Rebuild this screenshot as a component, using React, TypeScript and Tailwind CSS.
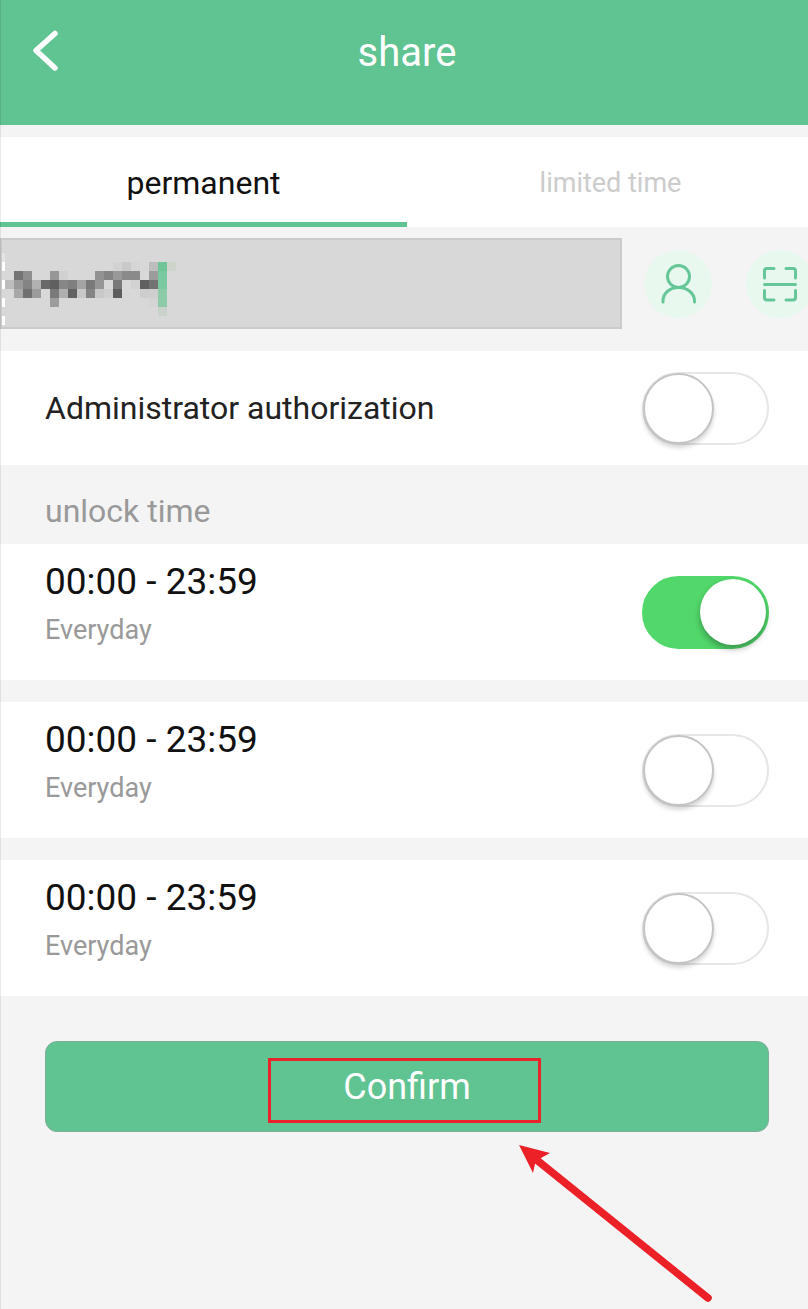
import { useState } from "react";

const CELL = 9;

// [column, row, colour] of each block in the obscured account name
const MOSAIC: [number, number, string][] = [
  [12, 0, "#d2d2d2"], [13, 0, "#c9c9c9"], [14, 0, "#d5d5d5"], [16, 0, "#bdbdbd"], [17, 0, "#6fc598"], [18, 0, "#cdd5cb"],
  [1, 1, "#747474"], [2, 1, "#8e8e8e"], [5, 1, "#979797"], [6, 1, "#d1d1d1"], [10, 1, "#929292"], [11, 1, "#848484"],
  [12, 1, "#999999"], [13, 1, "#8a8a8a"], [14, 1, "#8a8a8a"], [16, 1, "#9c9c9c"], [17, 1, "#79c8a0"],
  [0, 2, "#bcbcbc"], [1, 2, "#9a9a9a"], [2, 2, "#848484"], [3, 2, "#b1b1b1"], [4, 2, "#696969"], [5, 2, "#606060"],
  [6, 2, "#878787"], [7, 2, "#7f7f7f"], [8, 2, "#a3a3a3"], [9, 2, "#797979"], [10, 2, "#969696"], [12, 2, "#787878"],
  [14, 2, "#d2d2d2"], [15, 2, "#606060"], [16, 2, "#727272"], [17, 2, "#79c8a0"],
  [1, 3, "#a8a8a8"], [2, 3, "#707070"], [3, 3, "#9b9b9b"], [5, 3, "#7a7a7a"], [6, 3, "#b0b0b0"], [7, 3, "#626262"],
  [8, 3, "#c8c8c8"], [9, 3, "#848484"], [10, 3, "#c8c8c8"], [11, 3, "#cfcfcf"], [12, 3, "#5c5c5c"], [15, 3, "#cdcdcd"],
  [16, 3, "#cfcfcf"], [17, 3, "#8dcaa8"],
  [5, 4, "#9d9d9d"], [16, 4, "#d4d4d4"], [17, 4, "#8dcaa8"],
  [17, 5, "#c9d3cc"],
];

function Mosaic() {
  return (
    <svg
      aria-hidden="true"
      width="180"
      height="91"
      viewBox="0 0 180 91"
      shapeRendering="crispEdges"
      className="pointer-events-none absolute top-0 left-0"
    >
      <rect x="2" y="15" width="3" height="9" fill="#e4e4e4" />
      {[24, 42, 60, 78].map((y) => (
        <rect key={y} x="2" y={y} width="3" height="9" fill="#fff" />
      ))}
      {MOSAIC.map(([c, r, fill]) => (
        <rect key={`${c}-${r}`} x={5 + c * CELL} y={24 + r * CELL} width={CELL} height={CELL} fill={fill} />
      ))}
    </svg>
  );
}

function Switch({ id, initial = false }: { id: string; initial?: boolean }) {
  const [on, setOn] = useState(initial);
  return (
    <input
      id={id}
      type="checkbox"
      role="switch"
      checked={on}
      onChange={(e) => setOn(e.target.checked)}
      className="flex h-[73px] w-[127px] shrink-0 cursor-pointer appearance-none items-center rounded-full border-2 border-[#e6e6e6] bg-white before:-ml-px before:size-[71px] before:rounded-full before:border-2 before:border-[#c4c4c4] before:bg-white before:shadow-[0_4px_4px_rgba(0,0,0,0.16)] before:content-[''] checked:justify-end checked:border-[#51d76a] checked:bg-[#51d76a] checked:before:mr-px checked:before:size-[66px] checked:before:border-0 checked:before:shadow-[0_4px_6px_rgba(0,0,0,0.3)]"
    />
  );
}

function TimeRow({ id, on }: { id: string; on?: boolean }) {
  return (
    <li className="flex h-[136px] items-center justify-between bg-white pr-[39px] pl-[45px]">
      <label htmlFor={id} className="flex flex-col gap-2 pb-4">
        <span className="text-[37px] leading-[44px] text-[#111]">00:00 - 23:59</span>
        <span className="text-[27px] leading-9 text-[#999]">Everyday</span>
      </label>
      <Switch id={id} initial={on} />
    </li>
  );
}

export default function App() {
  const [tab, setTab] = useState("permanent");
  const tabs = ["permanent", "limited time"];

  return (
    <div className="relative min-h-screen overflow-hidden bg-[#f4f4f4] font-['Roboto',sans-serif]">
      <header className="-mr-1.5 grid h-[125px] grid-cols-[1fr_auto_1fr] items-start bg-[#5fc392] pt-7 text-white">
        <button type="button" aria-label="Back" className="ml-7 flex size-11 items-center justify-center">
          <svg width="36" height="44" viewBox="0 0 36 44" fill="none" stroke="currentColor" strokeWidth="5.500" strokeLinecap="round" strokeLinejoin="round">
            <path d="M23 5.500 L4 22.500 L23 40" />
          </svg>
        </button>
        <h1 className="text-[40px] leading-[50px]">share</h1>
      </header>

      <div role="tablist" className="mt-3 -mr-1.5 grid h-[90px] grid-cols-2 bg-white">
        {tabs.map((name) => (
          <button
            key={name}
            type="button"
            role="tab"
            aria-selected={tab === name}
            onClick={() => setTab(name)}
            className={
              tab === name
                ? "border-b-[5px] border-[#5fc392] pt-1.5 text-[32px] text-[#111]"
                : "border-b-[5px] border-transparent pt-2 text-[27px] text-[#ccc]"
            }
          >
            {name}
          </button>
        ))}
      </div>

      <div className="mt-[11px] -mr-1.5 flex items-center">
        <div className="relative min-w-0 flex-1">
          <input
            type="text"
            aria-label="Account"
            className="block h-[91px] w-full border-2 border-[#cbcbcb] bg-[#d8d8d8] px-3 text-[32px] outline-none"
          />
          <Mosaic />
        </div>
        <button type="button" aria-label="Contacts" className="ml-[22px] flex size-[68px] items-center justify-center rounded-full bg-[#e8f8ef] text-[#65c797]">
          <svg width="68" height="68" viewBox="0 0 68 68" fill="none" stroke="currentColor" strokeWidth="3" strokeLinecap="round">
            <circle cx="34.500" cy="26.500" r="11" />
            <path d="M19 52 V51 C19 43 26 37.500 34.500 37.500 C43 37.500 50.500 43 50.500 51 V52" />
          </svg>
        </button>
        <button type="button" aria-label="Scan code" className="ml-[34px] flex size-[68px] items-center justify-center rounded-full bg-[#e8f8ef] text-[#65c797]">
          <svg width="68" height="68" viewBox="0 0 68 68" fill="none" stroke="currentColor" strokeWidth="3" strokeLinecap="round">
            <path d="M18.500 28 V21 Q18.500 18.500 21 18.500 H28 M40 18.500 H47 Q49.500 18.500 49.500 21 V28 M18.500 40.500 V47.500 Q18.500 50 21 50 H28 M40 50 H47 Q49.500 50 49.500 47.500 V40.500 M18.500 34.500 H49.500" />
          </svg>
        </button>
      </div>

      <div className="mt-[22px] flex h-[114px] items-center justify-between bg-white pr-[39px] pl-[45px]">
        <label htmlFor="admin" className="text-[32px] leading-10 text-[#222]">
          Administrator authorization
        </label>
        <Switch id="admin" />
      </div>

      <h2 className="flex h-[79px] items-center pt-3 pl-[45px] text-[32px] leading-10 text-[#999]">unlock time</h2>

      <ul className="flex flex-col gap-[22px]">
        <TimeRow id="time-1" on />
        <TimeRow id="time-2" />
        <TimeRow id="time-3" />
      </ul>

      <div className="relative mt-[45px] mr-[39px] mb-[176px] ml-[45px]">
        <button type="button" className="flex h-[91px] w-full items-center justify-center rounded-xl border border-[#7fae97] bg-[#5fc392] pt-px text-[36px] text-white">
          Confirm
        </button>
        <div className="pointer-events-none absolute top-[17px] left-1/2 -ml-[139px] h-[65px] w-[273px] border-3 border-[#e8232a]" />
        <svg
          aria-hidden="true"
          width="196"
          height="160"
          viewBox="0 0 196 160"
          className="pointer-events-none absolute top-[103px] left-1/2 ml-[111px]"
        >
          <path d="M20 17 L190 154" stroke="#ec2027" strokeWidth="7.500" strokeLinecap="round" />
          <path d="M1 1 L32 9 L23 14 L17 20 L15 29 Z" fill="#ec2027" />
        </svg>
      </div>

      <div className="pointer-events-none absolute inset-y-0 left-0 w-px bg-black/8" />
    </div>
  );
}
